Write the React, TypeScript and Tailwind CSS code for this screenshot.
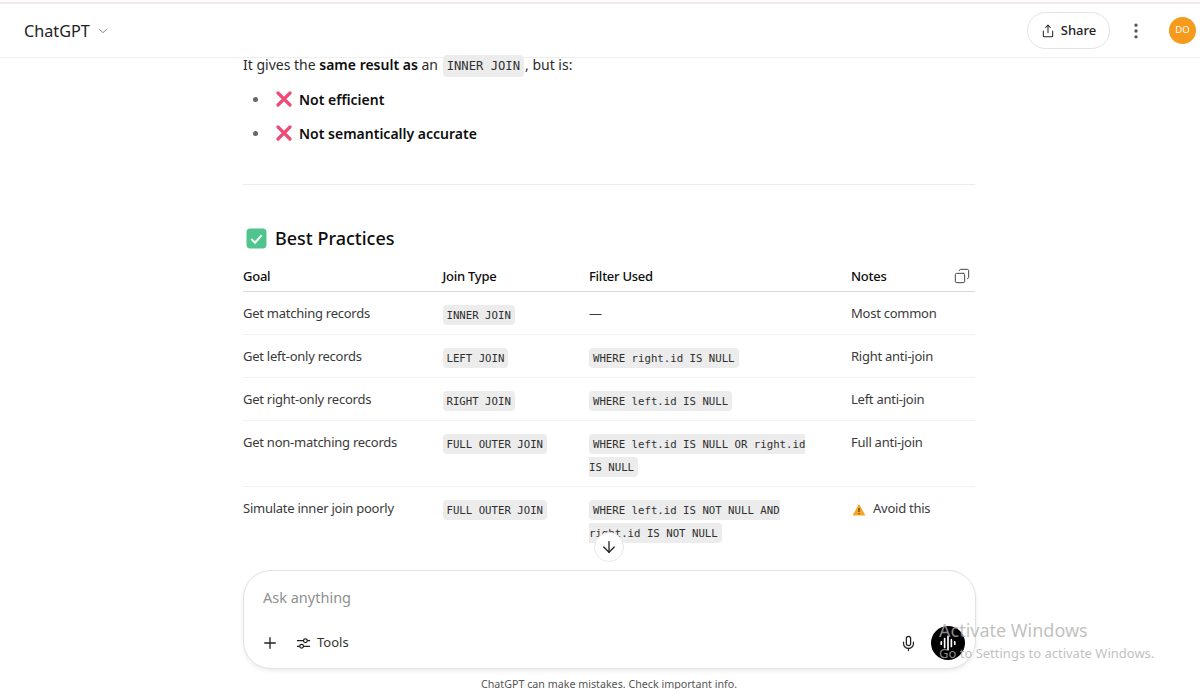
import { ArrowDown, ChevronDown, Copy, EllipsisVertical, Mic, Plus, Share } from 'lucide-react'
import type { ReactNode } from 'react'

const sans = 'font-["Noto_Sans",sans-serif]'

const Code = ({ children, big }: { children: ReactNode; big?: boolean }) => (
  <code className={`font-["DejaVu_Sans_Mono",monospace] leading-none tracking-normal text-[#2f2f2f] bg-[#ececec] rounded-[4px] px-1 ${big ? 'text-[12.2px] py-[4px] mx-[1px]' : 'text-[10.7px] py-[3.5px]'}`}>{children}</code>
)

const CrossMark = () => (
  <svg viewBox="0 0 16 16" className="w-4 h-4 shrink-0">
    <path d="M2 2 L14 14 M14 2 L2 14" stroke="#ee4b76" strokeWidth="3.2" strokeLinecap="round" />
  </svg>
)

const rows = [
  { goal: 'Get matching records', join: 'INNER JOIN', filter: null, notes: 'Most common' },
  { goal: 'Get left-only records', join: 'LEFT JOIN', filter: 'WHERE right.id IS NULL', notes: 'Right anti-join' },
  { goal: 'Get right-only records', join: 'RIGHT JOIN', filter: 'WHERE left.id IS NULL', notes: 'Left anti-join' },
  { goal: 'Get non-matching records', join: 'FULL OUTER JOIN', filter: 'WHERE left.id IS NULL OR right.id IS NULL', notes: 'Full anti-join' },
  { goal: 'Simulate inner join poorly', join: 'FULL OUTER JOIN', filter: 'WHERE left.id IS NOT NULL AND right.id IS NOT NULL', notes: 'warn' },
]

const BestPractices = () => (
  <table className="w-full table-fixed border-collapse text-[13px] tracking-[-0.25px] leading-[23px] text-[#3a3a3a]">
    <colgroup>
      <col className="w-[199.5px]" />
      <col className="w-[146.5px]" />
      <col className="w-[262px]" />
      <col />
    </colgroup>
    <thead>
      <tr className="border-b border-[#d9d9d9] text-[#0d0d0d] font-medium text-left">
        <th className="font-medium pb-[3px]">Goal</th>
        <th className="font-medium pb-[3px]">Join Type</th>
        <th className="font-medium pb-[3px]">Filter Used</th>
        <th className="font-medium pb-[3px]">
          <div className="flex items-center justify-between">
            Notes
            <Copy className="w-[16px] h-[16px] -scale-x-100 text-[#444] mr-[5px] -mt-[2px]" strokeWidth={1.5} />
          </div>
        </th>
      </tr>
    </thead>
    <tbody>
      {rows.map((r) => (
        <tr key={r.goal} className="border-b border-[#f1f1f1] last:border-b-0 align-top">
          <td className="pt-[10px] pb-[9px]">{r.goal}</td>
          <td className="pt-[10px] pb-[9px]"><Code>{r.join}</Code></td>
          <td className="pt-[10px] pb-[9px] pr-[36px]">{r.filter ? <Code>{r.filter}</Code> : '—'}</td>
          <td className="pt-[10px] pb-[9px]">
            {r.notes === 'warn' ? (
              <span className="flex items-center gap-[7px] pl-[1px]">
                <svg viewBox="0 0 14 13" className="w-[14px] h-[13px] shrink-0 mt-[2px]">
                  <path d="M7 1 L13.5 12.5 H0.5 Z" fill="#f5a623" />
                  <path d="M7 5 V9 M7 10.2 V11.2" stroke="#4a3410" strokeWidth="1.1" />
                </svg>
                Avoid this
              </span>
            ) : r.notes}
          </td>
        </tr>
      ))}
    </tbody>
  </table>
)

const App = () => {
  return (
    <div className={`${sans} relative h-[689px] w-[1200px] overflow-hidden bg-white flex flex-col text-[#0d0d0d]`}>
      <div className="h-[2px] bg-white shrink-0" />
      <div className="h-[2px] bg-[#fbe3ea] shrink-0" />

      <header className="h-[54px] shrink-0 border-b border-[#efefef] flex items-center justify-between pl-6 pr-[4px]">
        <div className="flex items-center gap-[6px] pt-[2px]">
          <span className="text-[16.2px] text-[#222]">ChatGPT</span>
          <ChevronDown className="w-[14px] h-[14px] text-[#777]" strokeWidth={1.5} />
        </div>
        <div className="flex items-center">
          <button className="h-[37px] w-[83px] rounded-full border border-[#e3e3e3] flex items-center justify-center gap-[6px] text-[13px] font-medium text-[#222]">
            <Share className="w-[14px] h-[14px]" strokeWidth={1.75} />
            Share
          </button>
          <EllipsisVertical className="w-5 h-5 text-[#555] ml-[16px]" />
          <div className="ml-[23px] w-[27px] h-[27px] rounded-full bg-[#f59a1b] text-white text-[9.5px] flex items-center justify-center">DO</div>
        </div>
      </header>

      <main className="flex-1 min-h-0">
        <div className="w-[732px] ml-[243px]">
          <p className="text-[14px] leading-[13px] text-[#2b2b2b]">
            It gives the <strong className="font-semibold text-[#0d0d0d]">same result as</strong> an <Code big>INNER JOIN</Code>, but is:
          </p>
          <ul className="mt-[15px] flex flex-col gap-[10px]">
            {['Not efficient', 'Not semantically accurate'].map((t) => (
              <li key={t} className="flex items-center h-6 text-[14px] font-semibold">
                <span className="w-[5px] h-[5px] rounded-full bg-[#666] ml-[10px] mr-[18px]" />
                <CrossMark />
                <span className="ml-[7px]">{t}</span>
              </li>
            ))}
          </ul>
          <hr className="mt-[39px] border-[#ececec]" />
          <h3 className="mt-[39px] flex items-center gap-[8px] pl-[3px] text-[18px] font-medium leading-7">
            <svg viewBox="0 0 20 20" className="w-[21px] h-[21px]">
              <rect x="0.5" y="0.5" width="19" height="19" rx="3.5" fill="#4fc48d" />
              <path d="M5 10.5 L8.6 14 L15 6.8" fill="none" stroke="#f2fff8" strokeWidth="2" />
            </svg>
            Best Practices
          </h3>
          <div className="mt-[13px]">
            <BestPractices />
          </div>
        </div>
      </main>

      <footer className="shrink-0 h-[125px] bg-white flex flex-col relative pl-[243px]">
        <button className="absolute -top-[32px] left-[594px] w-[30px] h-[30px] rounded-full bg-white border border-[#e8e8e8] flex items-center justify-center">
          <ArrowDown className="w-[18px] h-[18px] text-[#222]" strokeWidth={1.75} />
        </button>
        <div className="mt-[6px] w-[733px] h-[99px] shrink-0 rounded-[28px] border border-[#e2e2e2] shadow-[0_2px_4px_rgba(0,0,0,0.08)] bg-white flex flex-col px-[19px] pt-[14px]">
          <div className="text-[14.5px] leading-6 text-[#8f8f8f]">Ask anything</div>
          <div className="mt-[17px] flex items-center">
            <Plus className="w-[18px] h-[18px] -ml-[2px] text-[#222]" strokeWidth={1.75} />
            <svg viewBox="0 0 16 16" className="w-[15px] h-[15px] ml-[17px] text-[#222]" fill="none" stroke="currentColor" strokeWidth="1.3">
              <path d="M1 5 H8 M12 5 H15 M1 11 H4 M8 11 H15" />
              <circle cx="10" cy="5" r="2" />
              <circle cx="6" cy="11" r="2" />
            </svg>
            <span className="ml-[6px] text-[13px] text-[#333]">Tools</span>
            <Mic className="w-[17px] h-[17px] ml-auto mr-[14px] text-[#222]" strokeWidth={1.75} />
            <div className="w-[34px] h-[34px] -mr-[9px] rounded-full bg-black flex items-center justify-center">
              <svg viewBox="0 0 16 16" className="w-[18px] h-[18px]" stroke="white" strokeWidth="1.5" strokeLinecap="round">
                <path d="M2 7 V9 M5 4 V12 M8 2 V14 M11 5 V11 M14 7 V9" />
              </svg>
            </div>
          </div>
        </div>
        <p className="mt-[10px] ml-[238px] text-[10.7px] leading-[10px] text-[#555]">ChatGPT can make mistakes. Check important info.</p>
      </footer>

      <div className="absolute left-[939px] top-[618px] pointer-events-none text-[#b0b0b0]/80">
        <div className="text-[18px] leading-6">Activate Windows</div>
        <div className="text-[13px] leading-5 mt-[1px]">Go to Settings to activate Windows.</div>
      </div>
    </div>
  )
}

export default App
